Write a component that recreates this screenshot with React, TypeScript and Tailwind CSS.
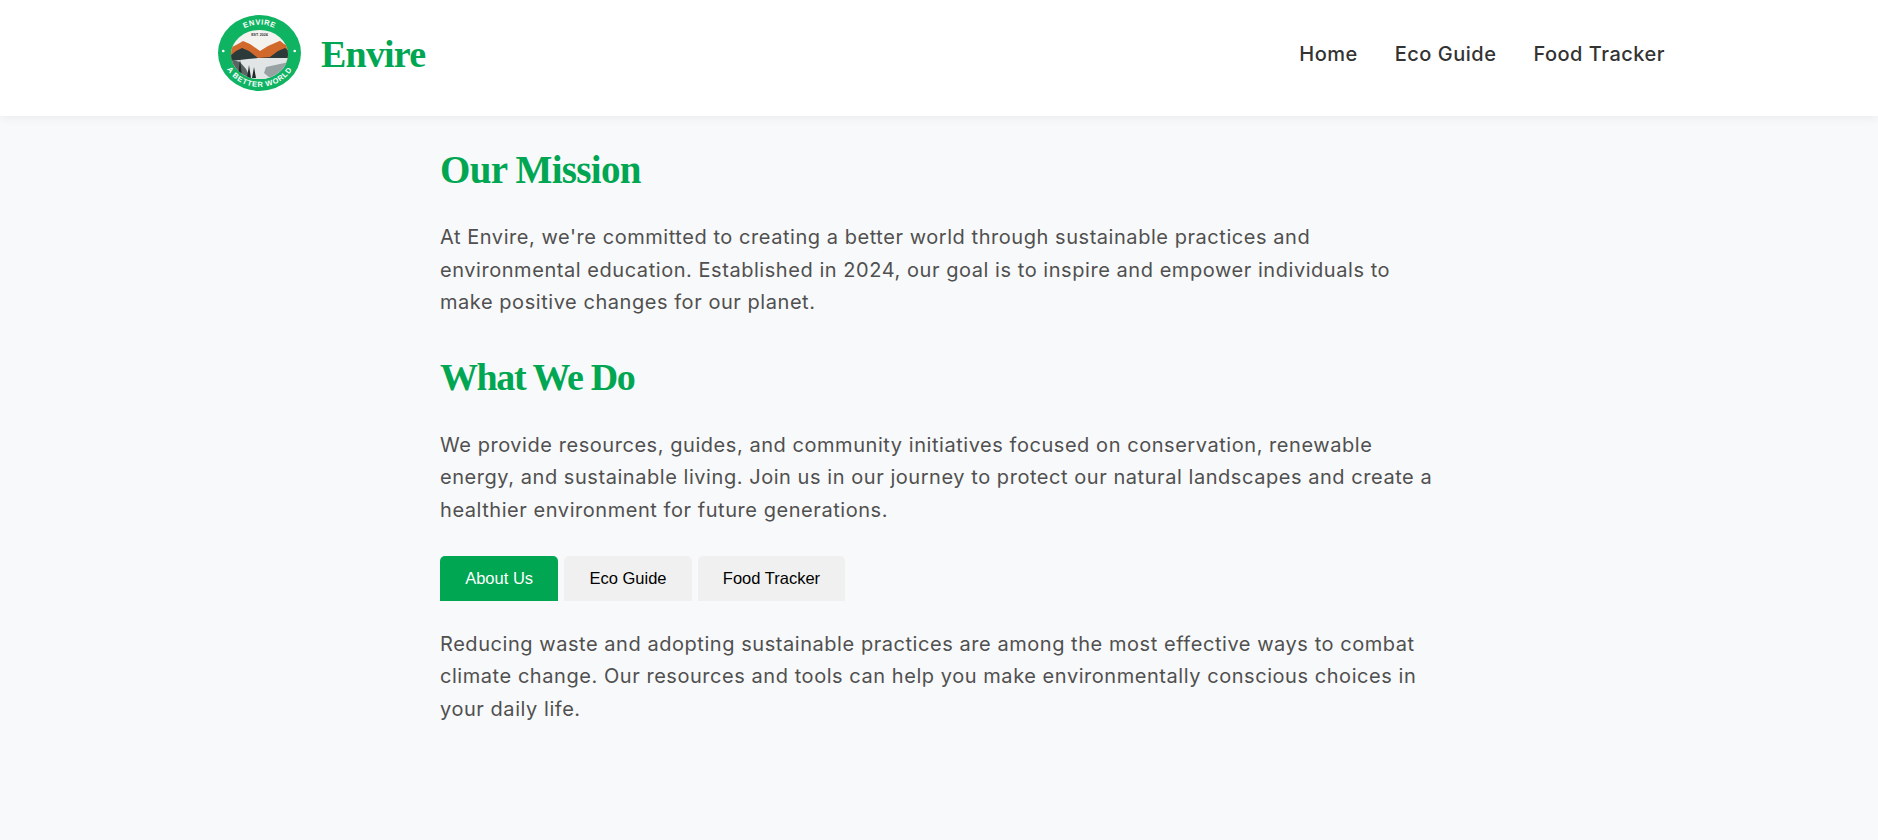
import { useState } from 'react';

const tabs = ['About Us', 'Eco Guide', 'Food Tracker'];

function Logo() {
	return (
		<svg width="84" height="78" viewBox="0 0 84 78" className="shrink-0">
			<defs>
				<path id="logoTop" d="M11 38 A30.5 28.5 0 0 1 72 38" />
				<path id="logoBottom" d="M3.5 36 A38 36 0 0 0 79.5 36" />
				<clipPath id="logoInner">
					<ellipse cx="41.5" cy="39.5" rx="28.5" ry="24.5" />
				</clipPath>
			</defs>
			<ellipse cx="41.5" cy="38" rx="41.5" ry="38" fill="#0fb463" />
			<ellipse cx="41.5" cy="39.5" rx="28.5" ry="24.5" fill="#f4f2ef" />
			<g clipPath="url(#logoInner)">
				<path d="M12 33 L20 29 L25 26 L32 29 L42 36 L50 31 L62 25.7 L66 29 L71 31 V48 H12 Z" fill="#d2692c" />
				<path d="M12 41 L18 36 L24 33 L31 36 L40 43 L52 42 L60 36 L67 33 L71 36 V50 H12 Z" fill="#2c3a3a" />
				<path d="M12 46 L30 44 L40 43 H71 V66 H12 Z" fill="#e2e5e5" />
				<path d="M48 52 L71 47 V60 L52 63 L46 58 Z" fill="#98a2a2" />
				<path d="M12 44 L22 47 L28 54 L34 66 H12 Z" fill="#5a6462" />
				<path d="M22 44 l2 18 h-4 Z M31 50 l2 13 h-4 Z M36 52 l2 11 h-4 Z" fill="#1f2a2a" />
			</g>
			<text fontFamily="'Liberation Sans', sans-serif" fontSize="3.6" fontWeight="700" fill="#333" x="41.5" y="21" textAnchor="middle">
				EST. 2024
			</text>
			<text fontFamily="'Liberation Sans', sans-serif" fontSize="7.5" fontWeight="700" letterSpacing="0.6" fill="#fff" textAnchor="middle">
				<textPath href="#logoTop" startOffset="50%">
					ENVIRE
				</textPath>
			</text>
			<text fontFamily="'Liberation Sans', sans-serif" fontSize="7.5" fontWeight="700" letterSpacing="0.7" fill="#fff" textAnchor="middle">
				<textPath href="#logoBottom" startOffset="50%">
					A BETTER WORLD
				</textPath>
			</text>
			<circle cx="5.3" cy="36" r="1.3" fill="#fff" />
			<circle cx="76.7" cy="36" r="1.3" fill="#fff" />
		</svg>
	);
}

export default function App() {
	const [active, setActive] = useState('About Us');

	return (
		<div className="min-h-[840px] bg-[#f8f9fa] font-['Inter',sans-serif] text-[#505050]">
			<header className="h-[116px] bg-white shadow-[0_2px_10px_rgba(0,0,0,0.06)]">
				<div className="ml-[218px] flex h-full w-[1447px] items-center justify-between pb-[8px]">
					<div className="flex items-center gap-[19px]">
						<Logo />
						<span className="font-['Liberation_Serif',serif] text-[38px] font-bold tracking-[-0.8px] text-[#00a651]">Envire</span>
					</div>
					<nav className="flex gap-[37px] text-[20px] font-medium tracking-[0.5px] text-[#333]">
						<a href="#">Home</a>
						<a href="#">Eco Guide</a>
						<a href="#">Food Tracker</a>
					</nav>
				</div>
			</header>
			<main className="ml-[440px] w-[1000px] pt-[28px]">
				<h2 className="font-['Liberation_Serif',serif] text-[39px] leading-[52px] font-bold tracking-[-0.7px] text-[#00a651]">Our Mission</h2>
				<p className="mt-[25px] text-[20px] leading-[32.6px] tracking-[0.55px]">
					At Envire, we're committed to creating a better world through sustainable practices and environmental education. Established in 2024, our goal is to inspire and empower individuals to make positive changes for our planet.
				</p>
				<h2 className="mt-[32px] font-['Liberation_Serif',serif] text-[38px] leading-[52px] font-bold tracking-[-1.4px] text-[#00a651]">What We Do</h2>
				<p className="mt-[26px] text-[20px] leading-[32.6px] tracking-[0.55px]">
					We provide resources, guides, and community initiatives focused on conservation, renewable energy, and sustainable living. Join us in our journey to protect our natural landscapes and create a healthier environment for future generations.
				</p>
				<div className="mt-[29.5px] flex gap-[6px] font-['Liberation_Sans',sans-serif] text-[16.5px]">
					{tabs.map((tab) => (
						<button
							key={tab}
							onClick={() => setActive(tab)}
							className={
								active === tab
									? 'h-[45px] rounded-t-[5px] bg-[#00a651] px-[25.2px] text-white'
									: 'h-[45px] rounded-t-[5px] bg-[#f0f0f0] px-[25.2px] text-black'
							}
						>
							{tab}
						</button>
					))}
				</div>
				<p className="mt-[26.5px] text-[20px] leading-[32.6px] tracking-[0.55px]">
					Reducing waste and adopting sustainable practices are among the most effective ways to combat climate change. Our resources and tools can help you make environmentally conscious choices in your daily life.
				</p>
			</main>
		</div>
	);
}
